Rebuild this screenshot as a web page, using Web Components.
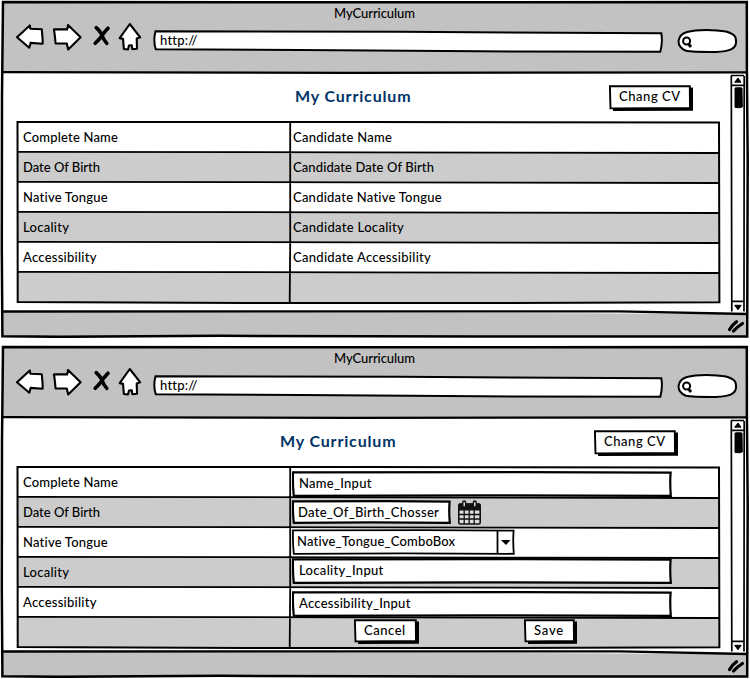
<!DOCTYPE html>
<html lang="en">
<head>
<meta charset="utf-8">
<title>MyCurriculum</title>
<style>
html,body{margin:0;background:#fff}
body{width:750px;height:679px;overflow:hidden;font:500 13px/16px Lato,"Open Sans",sans-serif;color:#000}
</style>
</head>
<body>
<cv-page></cv-page>
<script>
const define=(name,html,setup)=>customElements.define(name,class extends HTMLElement{
  connectedCallback(){
    if(this.shadowRoot)return;
    const root=this.attachShadow({mode:'open'});
    root.innerHTML=typeof html==='function'?html(this):html;
    if(setup)setup(this,root);
  }
});

/* Text run whose tracking is spread over a given width */
define('fit-text',e=>`<style>:host{display:block;flex:none;white-space:pre;width:${e.getAttribute('w')}px}
:host([title-size]){font-size:16px;line-height:20px;font-weight:700;color:#036}span{display:inline-block}</style><span>${e.getAttribute('text')}</span>`,(e,r)=>{
  const s=r.querySelector('span'),n=e.getAttribute('text').length;
  s.style.letterSpacing=(e.getAttribute('w')-s.getBoundingClientRect().width)/(n-.5)+'px';
});

define('nav-icons',`<style>:host{display:block;width:127px;height:30px}svg{display:block}</style>
<svg width="127" height="30" viewBox="16 22 127 30" fill="#fff" stroke="#000" stroke-width="2.1" stroke-linejoin="round" stroke-linecap="round">
<path d="M17 37.2 29.8 25.4 30.4 28.7 41.8 29.3C42 34 43 39 42.6 43.7L30.6 42.9 29.3 47.8Z"/>
<path d="M53.9 29.4 67.2 29.4 68 25 80.6 37.2 68.2 49.4 66.8 43.5 55.6 43.4C55 39 55 34 53.9 29.4Z"/>
<path d="M96.2 27.6Q101 32 102.2 35.8T106.8 43.4M108 28.2Q103.5 33 101.8 35.8T95.2 43.3" fill="none" stroke-width="3.6"/>
<path d="M129.8 24 140.2 37.3 136.7 38.6 137 48.8 132.3 49.2 131.8 45.2 129 45.6 128 49.4 123.9 49 123 38.9 119.7 38.2Z"/>
</svg>`);

define('url-bar',`<style>:host{display:block;position:relative;width:510px;height:24px}svg{position:absolute;inset:0}
.t{position:relative;padding:3px 0 0 7px}</style>
<svg width="510" height="24" viewBox="153 29 510 24"><path d="M155.5 31.2 400 31.8 661.3 33.2C662.4 39 661.8 46 660.3 51.8L480 51.3 300 50 155.8 49.3C154 44 154 37 155.5 31.2Z" fill="#fff" stroke="#000" stroke-width="2"/></svg>
<div class="t"><fit-text text="http://" w="37"></fit-text></div>`);

define('search-box',`<style>:host{display:block;width:62px;height:26px}svg{display:block}</style>
<svg width="62" height="26" viewBox="676 28 62 26" fill="#fff" stroke="#000"><path d="M687 32C697 29 716 29.5 726 31.5 735 34 736.5 37 736 43 735 49.5 729 51 716 52 704 52 691 52 686 50.8 680 48.5 678.5 45 678.5 41 679 37 682 33.5 687 32Z" stroke-width="2"/><circle cx="686.6" cy="41" r="3.5" stroke-width="2"/><path d="M688.5 44 691 47" stroke-width="2.8"/></svg>`);

define('scroll-rail',e=>{const h=+e.getAttribute('h');return `<style>:host{display:block;width:15px;height:${h}px}svg{display:block}</style>
<svg width="15" height="${h}" fill="none" stroke="#000"><path d="M1.3 2.5 1.8 ${h-.4}M14.2 3 14 ${h-.4}M1 2.5H14M1 12.4H14M1.5 ${h-10.6}H14" stroke-width="1.7"/>
<path d="M8 5 11 9.2H4.7ZM4.7 ${h-6.7}H11.2L8 ${h-2.2}Z" fill="#000"/><path d="M5 15Q8 14.3 12 15L12.3 34Q9 35.4 5 34.4Z" fill="#000"/></svg>`});

define('sketch-button',e=>`<style>:host{display:block;position:relative;flex:none;width:${e.getAttribute('w')}px;height:${e.getAttribute('h')||25}px}
svg{position:absolute;inset:0}.c{position:relative;display:flex;padding:3px 0 0 10px}</style><svg width="100%" height="100%"></svg><div class="c"><fit-text text="${e.getAttribute('text')}" w="${e.getAttribute('tw')}"></fit-text></div>`,(e,r)=>{
  const w=+e.getAttribute('w'),h=+(e.getAttribute('h')||25);
  r.querySelector('svg').innerHTML=`<path d="M4 5 ${w} 2.5V${h-.3}L4 ${h}Z"/><path d="M.9 1.1 ${w-3.2} 1.3 ${w-3} ${h-3}L1.5 ${h-2.6}Z" fill="#fff" stroke="#000" stroke-width="1.9"/>`;
});

define('sketch-input',e=>{const w=+e.getAttribute('w'),h=+e.getAttribute('h'),c=e.hasAttribute('combo');return `<style>:host{display:block;position:relative;flex:none;width:${w}px;height:${h}px;margin-top:${e.getAttribute('dy')}px;margin-left:${e.getAttribute('dx')||0}px}
svg{position:absolute;inset:0}.c{position:relative;padding:${e.getAttribute('ty')}px 0 0 ${e.getAttribute('tx')||7}px}</style>
<svg width="${w}" height="${h}"><path d="M1 1.4 ${w*.6} 1.1 ${w-1.4} 1.6Q${w-2.2} ${h/2} ${w-1.2} ${h-1.2}L${w/2} ${h-1.7} 1.8 ${h-1.2}Q.6 ${h/2} 1 1.4Z" fill="#fff" stroke="#000" stroke-width="${c?1.8:2.2}"/>${c?`<path d="M${w-17.5} 1V${h-1}" stroke="#000" stroke-width="1.8"/><path d="M${w-14} ${h/2-2}H${w-4.5}L${w-9} ${h/2+3}Z"/>`:''}</svg>
<div class="c"><fit-text text="${e.getAttribute('text')}" w="${e.getAttribute('tw')}"></fit-text></div>`});

define('calendar-icon',`<style>:host{display:block;flex:none;margin:3px 0 0 7px}svg{display:block}</style>
<svg width="23" height="25" fill="none" stroke="#111"><rect x=".8" y="4" width="21.4" height="20" rx="1.5" fill="#ddd" stroke-width="1.6"/><path d="M1 4H22V10H1Z" fill="#111"/><path d="M1 14.5H22M1 19H22M6.2 10V24M11.2 10V24M16.2 10V24" stroke-width="1.3"/>
<path d="M6.2 6V2.3M16.8 6V2.3" stroke-width="4.2" stroke-linecap="round"/><path d="M6.2 5.8V2.8M16.8 5.8V2.8" stroke="#ccc" stroke-width="1.6" stroke-linecap="round"/></svg>`);

define('cv-table',`<style>:host{display:block;position:relative;width:705px;height:183px}
.g{display:grid;grid-template-rows:31px repeat(4,30px) 31px;padding:0 2px 0 1px}svg{position:absolute;inset:0}</style>
<div class="g"><slot></slot></div>
<svg width="705" height="183" fill="none" stroke="#000"><path d="M1.5 .9 350 1 703 1.6 703.4 181.3 480 182 230 181.9 1.7 181Z" stroke-width="2"/>
<path d="M1 30.9 350 31.3 703 32M1 60.9 350 61.3 703 62M1 90.9 350 91.3 703 92M1 120.9 350 121.3 703 122M1 150.9 350 151.3 703 152M274.2 2V122L273.7 181" stroke-width="1.8"/></svg>`);
define('cv-row',e=>`<style>:host{display:grid;grid-template-columns:273px 1fr;min-height:0}:host([shade]){background:#ccc}
.l{padding:7px 0 0 6px}:host(:first-child) .l{padding-top:8px}.v{display:flex;align-items:flex-start;padding:0 0 0 3px;position:relative;z-index:1}:host([edit]) .v{padding-left:2px}
.v ::slotted(fit-text){margin-top:7px}:host(:first-child) .v ::slotted(fit-text){margin-top:8px}</style>
<div class="l">${e.hasAttribute('text')?`<fit-text text="${e.getAttribute('text')}" w="${e.getAttribute('tw')}"></fit-text>`:''}</div><div class="v"><slot></slot></div>`);

define('browser-window',e=>{const h=+e.getAttribute('h'),f=h-27;return `<style>:host{display:block;position:relative;height:${h}px;isolation:isolate}
.frame{position:absolute;inset:0;z-index:-1}.g{display:grid;grid-template-rows:73px 1fr}
.title{display:flex;justify-content:center;padding:5px 1px 0 0}.bar{display:flex;padding:1px 0 0 16px;align-items:flex-start}
url-bar{margin:7px 0 0 10px}search-box{margin:6px 0 0 13px}
.body{display:flex;width:745px;justify-content:space-between}.main{width:721px}</style>
<svg class="frame" width="750" height="${h}" stroke="#000" fill="none"><path d="M3 2H747V73H3ZM3 ${f}L747 ${f+3} 747 ${h-2}H3Z" fill="#c2c2c2" stroke="none"/>
<path d="M3 1.9 300 2.2 746.8 2.1 746.9 72 747.7 160 747.2 ${h-1.6} 480 ${h-1.6} 220 ${h-2.2} 60 ${h-1.2} 2.4 ${h-1.7} 1.8 ${h-90} 2 95Z" stroke-width="2.5"/>
<path d="M3 72.2 350 72.8 747 72.3M2 ${f+.5}L350 ${f+.3} 620 ${f+.4} 747 ${f+3}" stroke-width="2.3"/>
<path d="M729.5 ${f+18.5}Q732 ${f+14} 736.5 ${f+10.8}M733.5 ${f+20}Q737 ${f+16} 742.5 ${f+12.5}" stroke-width="3.2" stroke-linecap="round"/></svg>
<div class="g"><div><div class="title"><fit-text text="MyCurriculum" w="81"></fit-text></div><div class="bar"><nav-icons></nav-icons><url-bar></url-bar><search-box></search-box></div></div>
<div class="body"><div class="main"><slot></slot></div><scroll-rail h="${f-72}"></scroll-rail></div></div>`});

define('cv-heading',e=>`<style>:host{display:flex;height:48px;padding-left:${e.getAttribute('x')}px}fit-text{margin-top:13px}sketch-button{margin:12px 0 0 198px}</style>
<fit-text title-size text="My Curriculum" w="116"></fit-text><sketch-button w="84" h="26" text="Chang CV" tw="61.5"></sketch-button>`);

define('cv-page',`<style>:host{display:flex;flex-direction:column;gap:7px}cv-table{margin-left:16px}.cancel{margin:2px 0 0 62px}.save{margin:2px 0 0 105px}</style>
<browser-window h="338"><cv-heading x="295"></cv-heading><cv-table>
<cv-row text="Complete Name" tw="95"><fit-text text="Candidate Name" w="99"></fit-text></cv-row>
<cv-row shade text="Date Of Birth" tw="77"><fit-text text="Candidate Date Of Birth" w="141"></fit-text></cv-row>
<cv-row text="Native Tongue" tw="85"><fit-text text="Candidate Native Tongue" w="149"></fit-text></cv-row>
<cv-row shade text="Locality" tw="46"><fit-text text="Candidate Locality" w="111"></fit-text></cv-row>
<cv-row text="Accessibility" tw="73.5"><fit-text text="Candidate Accessibility" w="138"></fit-text></cv-row>
<cv-row shade></cv-row></cv-table></browser-window>
<browser-window h="333"><cv-heading x="280"></cv-heading><cv-table>
<cv-row edit text="Complete Name" tw="95"><sketch-input w="380" h="26" dy="5" ty="4" text="Name_Input" tw="72.5"></sketch-input></cv-row>
<cv-row edit shade text="Date Of Birth" tw="77"><sketch-input w="159" h="24" dy="3" ty="4" tx="6" text="Date_Of_Birth_Chosser" tw="141"></sketch-input><calendar-icon></calendar-icon></cv-row>
<cv-row edit text="Native Tongue" tw="85"><sketch-input combo w="223" h="26" dy="2" ty="4" tx="5" text="Native_Tongue_ComboBox" tw="158.5"></sketch-input></cv-row>
<cv-row edit shade text="Locality" tw="46"><sketch-input w="380" h="26" dy="1" ty="4" text="Locality_Input" tw="84.5"></sketch-input></cv-row>
<cv-row edit text="Accessibility" tw="73.5"><sketch-input w="380" h="26" dy="4" ty="4" text="Accessibility_Input" tw="111.5"></sketch-input></cv-row>
<cv-row edit shade><sketch-button class="cancel" w="65" text="Cancel" tw="41.5"></sketch-button><sketch-button class="save" w="53" text="Save" tw="29.5"></sketch-button></cv-row>
</cv-table></browser-window>`);
</script>
</body>
</html>
